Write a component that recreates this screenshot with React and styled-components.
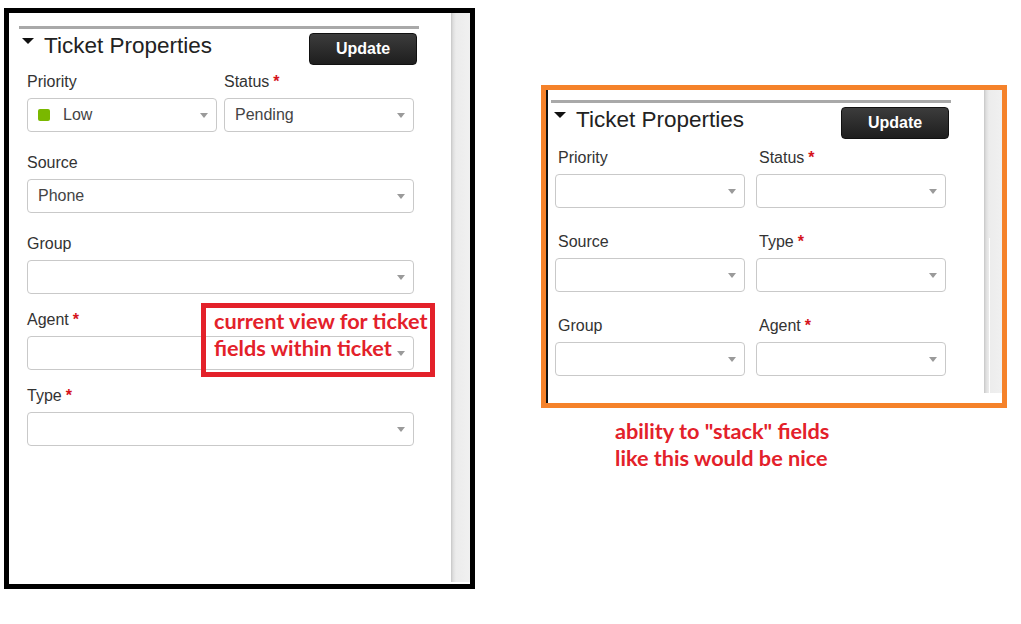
import React from "react";
import styled, { createGlobalStyle } from "styled-components";

const GlobalStyle = createGlobalStyle`
  html, body {
    margin: 0;
    background: #fff;
  }
  body {
    font-family: "Liberation Sans", Arial, sans-serif;
    color: #333;
  }
`;

const Page = styled.div`
  display: flex;
  align-items: flex-start;
  padding: 8px 0 0 4px;
`;

const Frame = styled.div`
  position: relative;
  display: flex;
  box-sizing: border-box;
  width: ${(p) => p.$width}px;
  height: ${(p) => p.$height}px;
  border: 5px solid ${(p) => p.$color};
  background: #fff;
`;

const Content = styled.div`
  flex: 1;
  padding: ${(p) => p.$top}px 0 0 ${(p) => p.$left}px;
  border-left: ${(p) => (p.$edge ? "2px solid #111" : "none")};
`;

const Scrollbar = styled.div`
  display: flex;
  flex-direction: column;
  width: ${(p) => p.$width}px;
  margin-bottom: ${(p) => p.$bottom}px;
  background: linear-gradient(
    to right,
    #c6c6c6 0,
    #dedede 2px,
    #ececec 5px,
    #f0f0f0 100%
  );
`;

const Thumb = styled.div`
  margin-top: auto;
  margin-left: 5px;
  width: 1px;
  height: 155px;
  background: #fff;
`;

const Rule = styled.div`
  width: 400px;
  height: 3px;
  background: #a9a9a9;
`;

const Header = styled.div`
  display: flex;
  justify-content: space-between;
  align-items: flex-start;
  box-sizing: border-box;
  width: 400px;
  padding: 4px 2px 0 3px;
`;

const Title = styled.div`
  display: flex;
  align-items: flex-start;
  font-size: 22.5px;
  line-height: 26px;
  color: #222;
`;

const Caret = styled.span`
  width: 0;
  height: 0;
  margin: 5px 10px 0 0;
  border-left: 6.5px solid transparent;
  border-right: 6.5px solid transparent;
  border-top: 6px solid #111;
`;

const UpdateButton = styled.button`
  box-sizing: border-box;
  width: 108px;
  height: 32px;
  padding: 0;
  border: 1px solid #111;
  border-radius: 4px;
  background: linear-gradient(#3c3c3c, #1e1e1e);
  color: #fff;
  font-family: "Liberation Sans", Arial, sans-serif;
  font-size: 16px;
  font-weight: bold;
`;

const FieldGrid = styled.div`
  display: grid;
  grid-template-columns: repeat(2, 190px);
  column-gap: ${(p) => p.$gap}px;
  margin-left: ${(p) => p.$inset}px;
`;

const Field = styled.div`
  grid-column: ${(p) => (p.$wide ? "1 / -1" : "auto")};
  margin-top: ${(p) => p.$space}px;
`;

const Label = styled.div`
  padding-left: ${(p) => p.$indent || 0}px;
  margin-bottom: 6px;
  font-size: 16px;
  line-height: 20px;
  color: #333;
`;

const Req = styled.span`
  margin-left: 4px;
  color: #d5141c;
  font-weight: bold;
`;

const SelectBox = styled.div`
  display: flex;
  align-items: center;
  box-sizing: border-box;
  height: 34px;
  padding: 0 8px 0 10px;
  border: 1px solid #c9c9c9;
  border-radius: 4px;
  background: #fff;
  font-size: 16px;
  color: #444;
`;

const Arrow = styled.span`
  margin-left: auto;
  width: 0;
  height: 0;
  border-left: 4px solid transparent;
  border-right: 4px solid transparent;
  border-top: 5px solid #9a9a9a;
`;

const Swatch = styled.span`
  width: 12px;
  height: 12px;
  margin-right: 13px;
  border-radius: 2px;
  background: #7ab800;
`;

const Callout = styled.div`
  position: absolute;
  left: 192px;
  top: 290px;
  box-sizing: border-box;
  width: 234px;
  height: 74px;
  padding-left: 8px;
  border: 5px solid #e3212a;
`;

const Note = styled.div`
  margin: ${(p) => p.$top || 0}px 0 0 ${(p) => p.$left || 0}px;
  font-family: Lato, "Open Sans", sans-serif;
  font-weight: 700;
  font-size: 21.7px;
  line-height: 27px;
  color: #e3212a;
  white-space: nowrap;
`;

const RightColumn = styled.div`
  margin: 77px 0 0 66px;
`;

function Select({ value, swatch }) {
  return (
    <SelectBox>
      {swatch && <Swatch />}
      {value}
      <Arrow />
    </SelectBox>
  );
}

function FormField({ label, required, value, swatch, wide, space, indent }) {
  return (
    <Field $wide={wide} $space={space}>
      <Label $indent={indent}>
        {label}
        {required && <Req>*</Req>}
      </Label>
      <Select value={value} swatch={swatch} />
    </Field>
  );
}

function PanelHeader() {
  return (
    <>
      <Rule />
      <Header>
        <Title>
          <Caret />
          Ticket Properties
        </Title>
        <UpdateButton>Update</UpdateButton>
      </Header>
    </>
  );
}

const currentFields = [
  { label: "Priority", value: "Low", swatch: true, space: 7 },
  { label: "Status", value: "Pending", required: true, space: 7 },
  { label: "Source", value: "Phone", wide: true, space: 21 },
  { label: "Group", wide: true, space: 21 },
  { label: "Agent", required: true, wide: true, space: 16 },
  { label: "Type", required: true, wide: true, space: 16 },
];

const stackedFields = [
  { label: "Priority", space: 9 },
  { label: "Status", required: true, space: 9 },
  { label: "Source", space: 24 },
  { label: "Type", required: true, space: 24 },
  { label: "Group", space: 24 },
  { label: "Agent", required: true, space: 24 },
];

export default function App() {
  return (
    <>
      <GlobalStyle />
      <Page>
        <Frame $width={471} $height={581} $color="#000">
          <Content $top={13} $left={10}>
            <PanelHeader />
            <FieldGrid $gap={7} $inset={8}>
              {currentFields.map((f) => (
                <FormField key={f.label} {...f} />
              ))}
            </FieldGrid>
          </Content>
          <Scrollbar $width={19} $bottom={2} />
          <Callout>
            <Note>
              current view for ticket
              <br />
              fields within ticket
            </Note>
          </Callout>
        </Frame>

        <RightColumn>
          <Frame $width={466} $height={323} $color="#f5822a">
            <Content $top={10} $left={3} $edge>
              <PanelHeader />
              <FieldGrid $gap={11} $inset={4}>
                {stackedFields.map((f) => (
                  <FormField key={f.label} indent={3} {...f} />
                ))}
              </FieldGrid>
            </Content>
            <Scrollbar $width={18} $bottom={10}>
              <Thumb />
            </Scrollbar>
          </Frame>
          <Note $top={10} $left={74}>
            ability to "stack" fields
            <br />
            like this would be nice
          </Note>
        </RightColumn>
      </Page>
    </>
  );
}
